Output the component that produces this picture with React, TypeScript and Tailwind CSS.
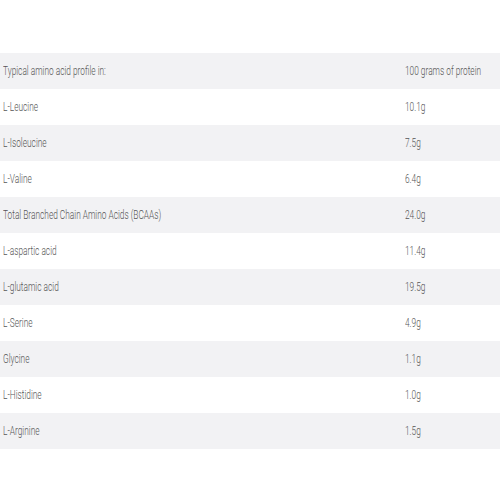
import React from "react";

const rows: [string, string][] = [
  ["Typical amino acid profile in:", "100 grams of protein"],
  ["L-Leucine", "10.1g"],
  ["L-Isoleucine", "7.5g"],
  ["L-Valine", "6.4g"],
  ["Total Branched Chain Amino Acids (BCAAs)", "24.0g"],
  ["L-aspartic acid", "11.4g"],
  ["L-glutamic acid", "19.5g"],
  ["L-Serine", "4.9g"],
  ["Glycine", "1.1g"],
  ["L-Histidine", "1.0g"],
  ["L-Arginine", "1.5g"],
];

export default function App() {
  return (
    <div className="w-[500px] h-[500px] overflow-hidden bg-white pt-[53px] font-['Roboto',sans-serif] text-[13px] font-light text-[#555]">
      {rows.map(([a, b], i) => (
        <div
          key={i}
          className={`flex h-[36px] items-center ${i % 2 === 0 ? "bg-[#f2f2f4]" : "bg-white"}`}
        >
          <div className="w-[405px] shrink-0 overflow-hidden pl-[3px] whitespace-nowrap">
            <span className="inline-block origin-left scale-x-[0.64]">{a}</span>
          </div>
          <div className="min-w-0 flex-1 overflow-hidden whitespace-nowrap">
            <span className="inline-block origin-left scale-x-[0.64]">{b}</span>
          </div>
        </div>
      ))}
    </div>
  );
}
